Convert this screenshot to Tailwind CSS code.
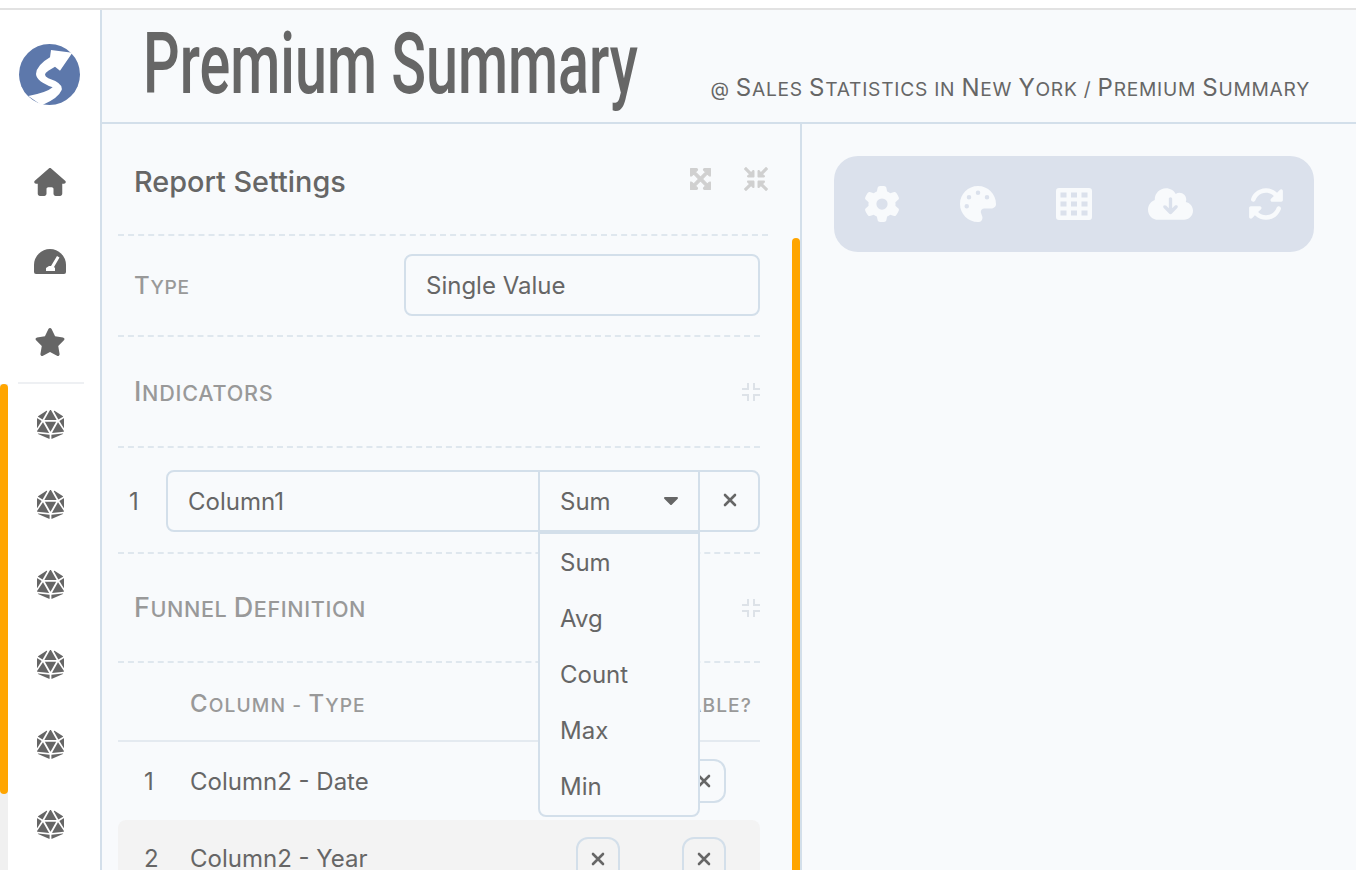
<!DOCTYPE html>
<html lang="en">
<head>
  <meta charset="UTF-8">
  <title>Premium Summary</title>
  <script src="https://cdn.jsdelivr.net/npm/@tailwindcss/browser@4"></script>
</head>
<body class="bg-white text-[#666] font-['Inter',sans-serif] text-[24px] h-[870px] overflow-hidden">
  <div class="h-[10px] border-b-2 border-[#e2e2e2]"></div>
  <div class="flex h-[860px]">

    <!-- Sidebar -->
    <aside class="relative w-[102px] border-r-2 border-[#d3dfea] bg-white flex flex-col shrink-0">
      <div class="h-[132px] pt-[34px] pl-[19px]">
        <svg class="w-[61px] h-[61px]" viewBox="57 132 183 183">
          <circle cx="148.500" cy="223.500" r="91.500" fill="#5d78ab"/>
          <path d="M217 158 L180 212 L165 200 L145 212 Q125 225 145 235 Q190 250 185 270 Q175 295 125 316 L85 288 Q140 278 158 262 Q110 245 108 222 Q110 195 150 172 L153 150 Z" fill="#fff"/>
        </svg>
      </div>
      <div class="flex flex-col w-full">
        <div class="h-[80px] flex items-center justify-center">
          <svg class="w-[32px] h-[28px]" viewBox="0 0 576 512" fill="#666"><path d="M575.8 255.5c0 18-15 32.1-32 32.1h-32l.7 160.2c0 2.7-.2 5.4-.5 8.1V472c0 22.1-17.9 40-40 40H456c-1.1 0-2.2 0-3.3-.1c-1.4 .1-2.8 .1-4.2 .1H416 392c-22.1 0-40-17.9-40-40V448 384c0-17.7-14.3-32-32-32H256c-17.7 0-32 14.3-32 32v64 24c0 22.1-17.9 40-40 40H160 128.1c-1.5 0-3-.1-4.5-.2c-1.2 .1-2.4 .2-3.6 .2H104c-22.1 0-40-17.9-40-40V360c0-.9 0-1.9 .1-2.8V287.6H32c-18 0-32-14-32-32.1c0-9 3-17 10-24L266.4 8c7-7 15-8 22-8s15 2 21 7L564.8 231.5c8 7 12 15 11 24z"/></svg>
        </div>
        <div class="h-[80px] flex items-center justify-center">
          <svg class="w-[32px] h-[26px]" viewBox="0 0 32 26"><path d="M0 23V16a16 16 0 0 1 32 0v7a2 2 0 0 1-2 2H2a2 2 0 0 1-2-2z" fill="#666"/><path d="M12 22v-3l3-2h2L23 7l2.500 1.500L20 18l1 1v3z" fill="#fff"/></svg>
        </div>
        <div class="h-[80px] flex items-center justify-center">
          <svg class="w-[32px] h-[28px]" viewBox="0 0 576 512" fill="#666"><path d="M316.900 18C311.600 7 300.400 0 288.100 0s-23.400 7-28.800 18L195 150.300 51.400 171.500c-12 1.800-22 10.200-25.700 21.700s-.7 24.200 7.900 32.700L137.800 329 113.200 474.700c-2 12 3 24.200 12.900 31.300s23 8 33.800 2.300l128.300-68.500 128.300 68.500c10.800 5.700 23.900 4.900 33.800-2.300s14.900-19.300 12.900-31.300L438.500 329 542.700 225.900c8.600-8.500 11.700-21.200 7.900-32.700s-13.700-19.900-25.700-21.700L381.200 150.300 316.900 18z"/></svg>
        </div>
        <div class="ml-[18px] w-[66px] h-[2px] bg-[#eef0f3]"></div>
        <div class="h-[80px] flex items-center justify-center">
          <svg class="w-[27px] h-[29px]" viewBox="0 0 480 512" fill="#666"><use href="#d20"/></svg>
        </div>
        <div class="h-[80px] flex items-center justify-center">
          <svg class="w-[27px] h-[29px]" viewBox="0 0 480 512" fill="#666"><use href="#d20"/></svg>
        </div>
        <div class="h-[80px] flex items-center justify-center">
          <svg class="w-[27px] h-[29px]" viewBox="0 0 480 512" fill="#666"><use href="#d20"/></svg>
        </div>
        <div class="h-[80px] flex items-center justify-center">
          <svg class="w-[27px] h-[29px]" viewBox="0 0 480 512" fill="#666"><use href="#d20"/></svg>
        </div>
        <div class="h-[80px] flex items-center justify-center">
          <svg class="w-[27px] h-[29px]" viewBox="0 0 480 512" fill="#666"><use href="#d20"/></svg>
        </div>
        <div class="h-[80px] flex items-center justify-center">
          <svg class="w-[27px] h-[29px]" viewBox="0 0 480 512" fill="#666"><use href="#d20"/></svg>
        </div>
      </div>
      <!-- sidebar scrollbar -->
      <div class="absolute left-0 top-[374px] bottom-0 w-[8px] bg-[#f0f0f0]">
        <div class="w-[8px] h-[410px] bg-[#ffa500] rounded-full"></div>
      </div>
    </aside>

    <!-- Main -->
    <div class="flex-1 bg-[#f8fafc] flex flex-col min-w-0">
      <header class="h-[114px] border-b-2 border-[#d3dfea] flex justify-between shrink-0 pl-[41px] pr-[46px]">
        <h1 class="w-[493px] whitespace-nowrap origin-left scale-x-[0.676] font-['Roboto',sans-serif] font-medium text-[85px] leading-[108px] text-[#666]">Premium Summary</h1>
        <div class="whitespace-nowrap uppercase text-[19.200px] leading-[30px] pt-[63px] tracking-[0.75px] text-[#666]">@ <b class="font-normal text-[24px]">S</b>ales <b class="font-normal text-[24px]">S</b>tatistics in <b class="font-normal text-[24px]">N</b>ew <b class="font-normal text-[24px]">Y</b>ork / <b class="font-normal text-[24px]">P</b>remium <b class="font-normal text-[24px]">S</b>ummary</div>
      </header>

      <div class="flex flex-1 min-h-0">
        <!-- Settings panel -->
        <section class="relative w-[700px] border-r-2 border-[#d3dfea] pl-[16px] pr-[32px] overflow-hidden shrink-0">
          <div class="h-[112px] border-b-2 border-dashed border-[#dfe7ee] flex items-center justify-between pl-[16px]">
            <h2 class="text-[28.800px] font-medium pt-[6px]">Report Settings</h2>
            <div class="flex gap-[33px]">
              <svg class="w-[21px] h-[24px]" viewBox="0 0 448 512" fill="#d0d0d0" stroke="#d0d0d0" stroke-width="24"><path d="M448 344v112a23.940 23.940 0 0 1-24 24H312c-21.390 0-32.090-25.900-17-41l36.200-36.200L224 295.600 116.770 402.900 153 439c15.090 15.100 4.390 41-17 41H24a23.940 23.940 0 0 1-24-24V344c0-21.400 25.890-32.100 41-17l36.190 36.200L184.460 256 77.180 148.700 41 185c-15.100 15.100-41 4.400-41-17V56a23.940 23.940 0 0 1 24-24h112c21.390 0 32.090 25.900 17 41l-36.200 36.200L224 216.400l107.230-107.300L295 73c-15.090-15.100-4.390-41 17-41h112a23.940 23.940 0 0 1 24 24v112c0 21.400-25.890 32.100-41 17l-36.190-36.200L263.540 256l107.280 107.300L407 327.100c15.100-15.200 41-4.500 41 16.900z"/></svg>
              <svg class="w-[24px] h-[24px]" viewBox="0 0 512 512" fill="#d0d0d0"><path d="M200 288H88c-21.400 0-32.100 25.800-17 41l32.900 31-99.200 99.300c-6.200 6.200-6.200 16.400 0 22.600l25.400 25.400c6.200 6.200 16.400 6.200 22.600 0L152 408l31.100 33c15.100 15.100 40.900 4.400 40.900-17V312c0-13.300-10.700-24-24-24zm112-64h112c21.400 0 32.100-25.900 17-41l-33-31 99.300-99.300c6.200-6.200 6.200-16.400 0-22.600L481.900 4.700c-6.200-6.200-16.400-6.200-22.600 0L360 104l-31.100-33C313.800 55.900 288 66.600 288 88v112c0 13.300 10.700 24 24 24zm96 136l33-31.100c15.100-15.100 4.400-40.900-17-40.900H312c-13.300 0-24 10.700-24 24v112c0 21.400 25.900 32.100 41 17l31-32.900 99.300 99.300c6.200 6.200 16.400 6.200 22.600 0l25.400-25.400c6.200-6.200 6.200-16.400 0-22.600L408 360zM183 71.100L152 104 52.700 4.700c-6.200-6.200-16.400-6.200-22.600 0L4.700 30.100c-6.200 6.200-6.200 16.400 0 22.600L104 152l-33 31.100C55.900 198.200 66.600 224 88 224h112c13.300 0 24-10.700 24-24V88c0-21.300-25.900-32-41-16.900z"/></svg>
            </div>
          </div>
          <div class="mr-[8px]">
            <div class="h-[101px] border-b-2 border-dashed border-[#dfe7ee] flex items-center justify-between pl-[16px]">
              <span class="uppercase text-[19.200px] text-[#999] font-medium tracking-[0.75px]"><b class="font-medium text-[24px]">T</b>ype</span>
              <div class="w-[356px] h-[62px] border-2 border-[#d3dfea] rounded-[8px] flex items-center px-[20px] pt-[2px] -mt-[1px]">Single Value</div>
            </div>
            <div class="h-[111px] border-b-2 border-dashed border-[#dfe7ee] flex items-center justify-between pl-[16px]">
              <span class="uppercase text-[21.600px] text-[#999] font-medium tracking-[0.75px] pt-[2px]"><b class="font-medium text-[27px]">I</b>ndicators</span>
              <svg class="w-[18px] h-[18px]" viewBox="0 0 18 18" fill="#dde2e8"><use href="#corners"/></svg>
            </div>
            <div class="h-[106px] border-b-2 border-dashed border-[#dfe7ee] flex items-center pl-[11px]">
              <span class="w-[37px] shrink-0 pt-[3px]">1</span>
              <div class="flex-1 h-[62px] mt-[2px] border-2 border-[#d3dfea] rounded-[8px] flex items-stretch">
                <div class="flex-1 flex items-center px-[20px] pt-[2px]">Column1</div>
                <div class="relative w-[160px] border-l-2 border-[#d3dfea] flex items-center justify-between pl-[20px] pr-[20px]">
                  <span class="pt-[2px]">Sum</span>
                  <svg class="w-[14px] h-[8px]" viewBox="0 0 14 8" fill="#666"><path d="M1 0h12a1 1 0 0 1 .7 1.700l-6 6a1 1 0 0 1-1.400 0l-6-6A1 1 0 0 1 1 0z"/></svg>
                  <!-- dropdown -->
                  <ul class="absolute z-10 left-[-2px] top-[60px] w-[162px] h-[285px] bg-[#f8fafc] border-2 border-[#d3dfea] rounded-b-[8px] pl-[20px] pt-[1px]">
                    <li class="h-[56px] flex items-center">Sum</li>
                    <li class="h-[56px] flex items-center">Avg</li>
                    <li class="h-[56px] flex items-center">Count</li>
                    <li class="h-[56px] flex items-center">Max</li>
                    <li class="h-[56px] flex items-center">Min</li>
                  </ul>
                </div>
                <div class="w-[60px] border-l-2 border-[#d3dfea] flex items-center justify-center pl-[1px] pb-[2px]">
                  <svg class="w-[14px] h-[14px]" viewBox="0 0 14 14"><use href="#x"/></svg>
                </div>
              </div>
            </div>
            <div class="h-[109px] border-b-2 border-dashed border-[#dfe7ee] flex items-center justify-between pl-[16px]">
              <span class="uppercase text-[21.600px] text-[#999] font-medium tracking-[0.6px] pt-[2px]"><b class="font-medium text-[27px]">F</b>unnel <b class="font-medium text-[27px]">D</b>efinition</span>
              <svg class="w-[18px] h-[18px]" viewBox="0 0 18 18" fill="#dde2e8"><use href="#corners"/></svg>
            </div>
            <div class="h-[79px] border-b-2 border-[#e4eaf0] flex items-center justify-between pl-[72px] pr-[8px] pt-[4px] uppercase text-[19.200px] text-[#999] font-medium tracking-[1.100px]">
              <span><b class="font-medium text-[24px]">C</b>olumn - <b class="font-medium text-[24px]">T</b>ype</span>
              <span><b class="font-medium text-[24px]">N</b>ullable?</span>
            </div>
            <div class="h-[78px] flex items-center pl-[26px]">
              <span class="w-[46px] pt-[2px]">1</span>
              <span class="flex-1 pt-[2px]">Column2 - Date</span>
              <span class="w-[44px] h-[44px] border-2 border-[#d3dfea] rounded-[12px] flex items-center justify-center mr-[34px]">
                <svg class="w-[14px] h-[14px]" viewBox="0 0 14 14"><use href="#x"/></svg>
              </span>
            </div>
            <div class="h-[100px] bg-[#f3f3f3] rounded-t-[8px] flex items-start pt-[17px] pl-[26px]">
              <span class="w-[46px] leading-[44px]">2</span>
              <span class="flex-1 leading-[44px]">Column2 - Year</span>
              <span class="w-[44px] h-[44px] border-2 border-[#d3dfea] rounded-[12px] flex items-center justify-center mr-[62px]">
                <svg class="w-[14px] h-[14px]" viewBox="0 0 14 14"><use href="#x"/></svg>
              </span>
              <span class="w-[44px] h-[44px] border-2 border-[#d3dfea] rounded-[12px] flex items-center justify-center mr-[34px]">
                <svg class="w-[14px] h-[14px]" viewBox="0 0 14 14"><use href="#x"/></svg>
              </span>
            </div>
          </div>
          <!-- panel scrollbar -->
          <div class="absolute right-0 top-[114px] bottom-0 w-[8px] bg-[#ffa500] rounded-t-full"></div>
        </section>

        <!-- Right column -->
        <section class="flex-1 pt-[32px] pl-[32px]">
          <div class="w-[480px] h-[96px] bg-[#dbe1ec] rounded-[24px] flex items-center">
            <div class="w-[96px] flex justify-center">
              <svg class="w-[36px] h-[36px]" viewBox="0 0 512 512" fill="#f8fafc"><path d="M495.900 166.600c3.200 8.700 .5 18.400-6.400 24.600l-43.300 39.400c1.100 8.300 1.700 16.800 1.700 25.400s-.6 17.100-1.700 25.400l43.300 39.400c6.900 6.200 9.600 15.900 6.400 24.600c-4.400 11.900-9.700 23.300-15.800 34.300l-4.700 8.100c-6.600 11-14 21.400-22.100 31.200c-5.900 7.200-15.700 9.600-24.500 6.800l-55.700-17.700c-13.400 10.300-28.200 18.900-44 25.400l-12.500 57.100c-2 9.100-9 16.300-18.200 17.800c-13.800 2.300-28 3.500-42.500 3.500s-28.700-1.200-42.500-3.500c-9.200-1.500-16.200-8.700-18.200-17.800l-12.500-57.100c-15.800-6.500-30.600-15.100-44-25.400L83.100 425.900c-8.800 2.800-18.600 .3-24.500-6.800c-8.100-9.800-15.500-20.200-22.100-31.200l-4.700-8.100c-6.100-11-11.400-22.400-15.800-34.300c-3.200-8.700-.5-18.400 6.400-24.600l43.300-39.400C64.600 273.100 64 264.600 64 256s.6-17.100 1.700-25.400L22.400 191.200c-6.900-6.200-9.600-15.900-6.400-24.600c4.400-11.900 9.700-23.300 15.800-34.300l4.700-8.100c6.600-11 14-21.400 22.100-31.200c5.900-7.200 15.700-9.600 24.500-6.800l55.700 17.700c13.400-10.300 28.200-18.900 44-25.400l12.500-57.100c2-9.100 9-16.300 18.200-17.800C227.300 1.200 241.500 0 256 0s28.700 1.200 42.500 3.500c9.200 1.500 16.200 8.700 18.200 17.800l12.500 57.100c15.800 6.500 30.600 15.100 44 25.400l55.700-17.700c8.800-2.800 18.600-.3 24.500 6.800c8.100 9.800 15.500 20.200 22.100 31.200l4.700 8.100c6.100 11 11.400 22.400 15.800 34.300zM256 336a80 80 0 1 0 0-160 80 80 0 1 0 0 160z"/></svg>
            </div>
            <div class="w-[96px] flex justify-center">
              <svg class="w-[36px] h-[36px]" viewBox="0 0 512 512" fill="#f8fafc"><path d="M512 256c0 .9 0 1.800 0 2.700c-.4 36.500-33.600 61.300-70.100 61.300H344c-26.500 0-48 21.500-48 48c0 3.400 .4 6.700 1 9.900c2.100 10.200 6.500 20 10.800 29.900c6.100 13.800 12.100 27.500 12.100 42c0 31.800-21.600 60.700-53.400 62c-3.500 .1-7 .2-10.600 .2C114.600 512 0 397.400 0 256S114.600 0 256 0S512 114.600 512 256zM128 288a32 32 0 1 0 -64 0 32 32 0 1 0 64 0zm0-96a32 32 0 1 0 0-64 32 32 0 1 0 0 64zM288 96a32 32 0 1 0 -64 0 32 32 0 1 0 64 0zm96 96a32 32 0 1 0 0-64 32 32 0 1 0 0 64z"/></svg>
            </div>
            <div class="w-[96px] flex justify-center">
              <svg class="w-[36px] h-[32px]" viewBox="0 0 36 32"><path fill="#f8fafc" fill-rule="evenodd" d="M3 0h30a3 3 0 0 1 3 3v26a3 3 0 0 1-3 3H3a3 3 0 0 1-3-3V3a3 3 0 0 1 3-3zM4.500 4.500v5h6v-5zM15 4.500v5h6v-5zM25.500 4.500v5h6v-5zM4.500 13.500v5h6v-5zM15 13.500v5h6v-5zM25.500 13.500v5h6v-5zM4.500 22.500v5h6v-5zM15 22.500v5h6v-5zM25.500 22.500v5h6v-5z"/></svg>
            </div>
            <div class="w-[96px] flex justify-center">
              <svg class="w-[45px] h-[36px]" viewBox="0 0 640 512" fill="#f8fafc"><path d="M144 480C64.500 480 0 415.500 0 336c0-62.800 40.200-116.200 96.200-135.900c-.1-2.700-.2-5.400-.2-8.100c0-88.400 71.600-160 160-160c59.300 0 111 32.200 138.700 80.200C409.900 102 428.300 96 448 96c53 0 96 43 96 96c0 12.200-2.300 23.800-6.400 34.600C596 238.400 640 290.100 640 352c0 70.700-57.300 128-128 128H144zm79-167l80 80c9.400 9.400 24.600 9.400 33.900 0l80-80c9.400-9.400 9.400-24.600 0-33.900s-24.600-9.400-33.900 0l-39 39V184c0-13.300-10.700-24-24-24s-24 10.700-24 24V318.100l-39-39c-9.400-9.400-24.600-9.400-33.900 0s-9.400 24.600 0 33.900z"/></svg>
            </div>
            <div class="w-[96px] flex justify-center">
              <svg class="w-[36px] h-[36px]" viewBox="0 0 512 512" fill="#f8fafc"><path d="M142.900 142.900c62.200-62.200 162.700-62.500 225.300-1L327 183c-6.900 6.900-8.900 17.200-5.200 26.200s12.500 14.800 22.200 14.800H463.500c0 0 0 0 0 0H472c13.300 0 24-10.700 24-24V72c0-9.700-5.800-18.500-14.800-22.200s-19.300-1.700-26.200 5.200L413.400 96.600c-87.600-86.500-228.700-86.200-315.800 1C73.200 122 55.600 150.700 44.800 181.400c-5.900 16.700 2.900 34.900 19.500 40.800s34.900-2.900 40.800-19.500c7.700-21.800 20.200-42.300 37.800-59.800zM16 312v7.600 .7V440c0 9.700 5.800 18.500 14.800 22.200s19.300 1.700 26.200-5.200l41.600-41.600c87.600 86.500 228.700 86.200 315.800-1c24.400-24.400 42.100-53.100 52.900-83.700c5.900-16.700-2.900-34.900-19.500-40.800s-34.900 2.900-40.800 19.500c-7.700 21.800-20.200 42.300-37.800 59.800c-62.200 62.200-162.700 62.500-225.300 1L185 329c6.900-6.900 8.900-17.200 5.200-26.200s-12.500-14.800-22.200-14.800H48.400h-.7H40c-13.300 0-24 10.700-24 24z"/></svg>
            </div>
          </div>
        </section>
      </div>
    </div>
  </div>

  <!-- shared icon shapes -->
  <svg class="hidden" width="0" height="0">
    <defs>
      <path id="d20" d="M106.750 215.060L1.200 370.950c-3.080 5 .1 11.500 5.930 12.140l208.260 22.070-108.640-190.100zM7.410 315.430L82.700 193.080 6.060 147.100c-2.670-1.600-6.060.32-6.060 3.430v162.810c0 4.030 5.290 5.530 7.410 2.090zM18.250 423.600l194.400 87.660c5.300 2.450 11.350-1.430 11.350-7.260v-65.670l-203.550-22.300c-4.450-.5-6.230 5.590-2.200 7.570zm81.220-257.780L179.400 22.880c4.340-7.060-3.590-15.250-10.780-11.140L17.810 110.350c-2.470 1.620-2.390 5.260.13 6.780l81.530 48.690zM240 176h109.210L253.630 7.620C250.500 2.540 245.250 0 240 0s-10.500 2.540-13.630 7.620L130.790 176H240zm233.940-28.900l-76.640 45.990 75.290 122.350c2.110 3.440 7.410 1.940 7.410-2.100V150.530c0-3.110-3.390-5.030-6.060-3.430zm-93.410 18.720l81.530-48.700c2.530-1.520 2.600-5.160.13-6.780l-150.810-98.600c-7.190-4.110-15.120 4.080-10.780 11.140l79.930 142.940zm79.020 250.210L256 438.320v65.670c0 5.840 6.050 9.710 11.350 7.260l194.400-87.660c4.030-1.970 2.250-8.060-2.200-7.560zm-86.300-200.970l-108.630 190.100 208.260-22.070c5.830-.65 9.010-7.140 5.930-12.140L373.250 215.060zM240 208H139.570L240 383.750 340.430 208H240z"/>
      <g id="corners">
        <path d="M5 0h2v7H0V5h5z M11 0h2v5h5v2h-7z M0 11h7v7H5v-5H0z M11 11h7v2h-5v5h-2z"/>
      </g>
      <path id="x" d="M2 2 L12 12 M12 2 L2 12" stroke="#666" stroke-width="2.600" stroke-linecap="round" fill="none"/>
    </defs>
  </svg>
</body>
</html>
